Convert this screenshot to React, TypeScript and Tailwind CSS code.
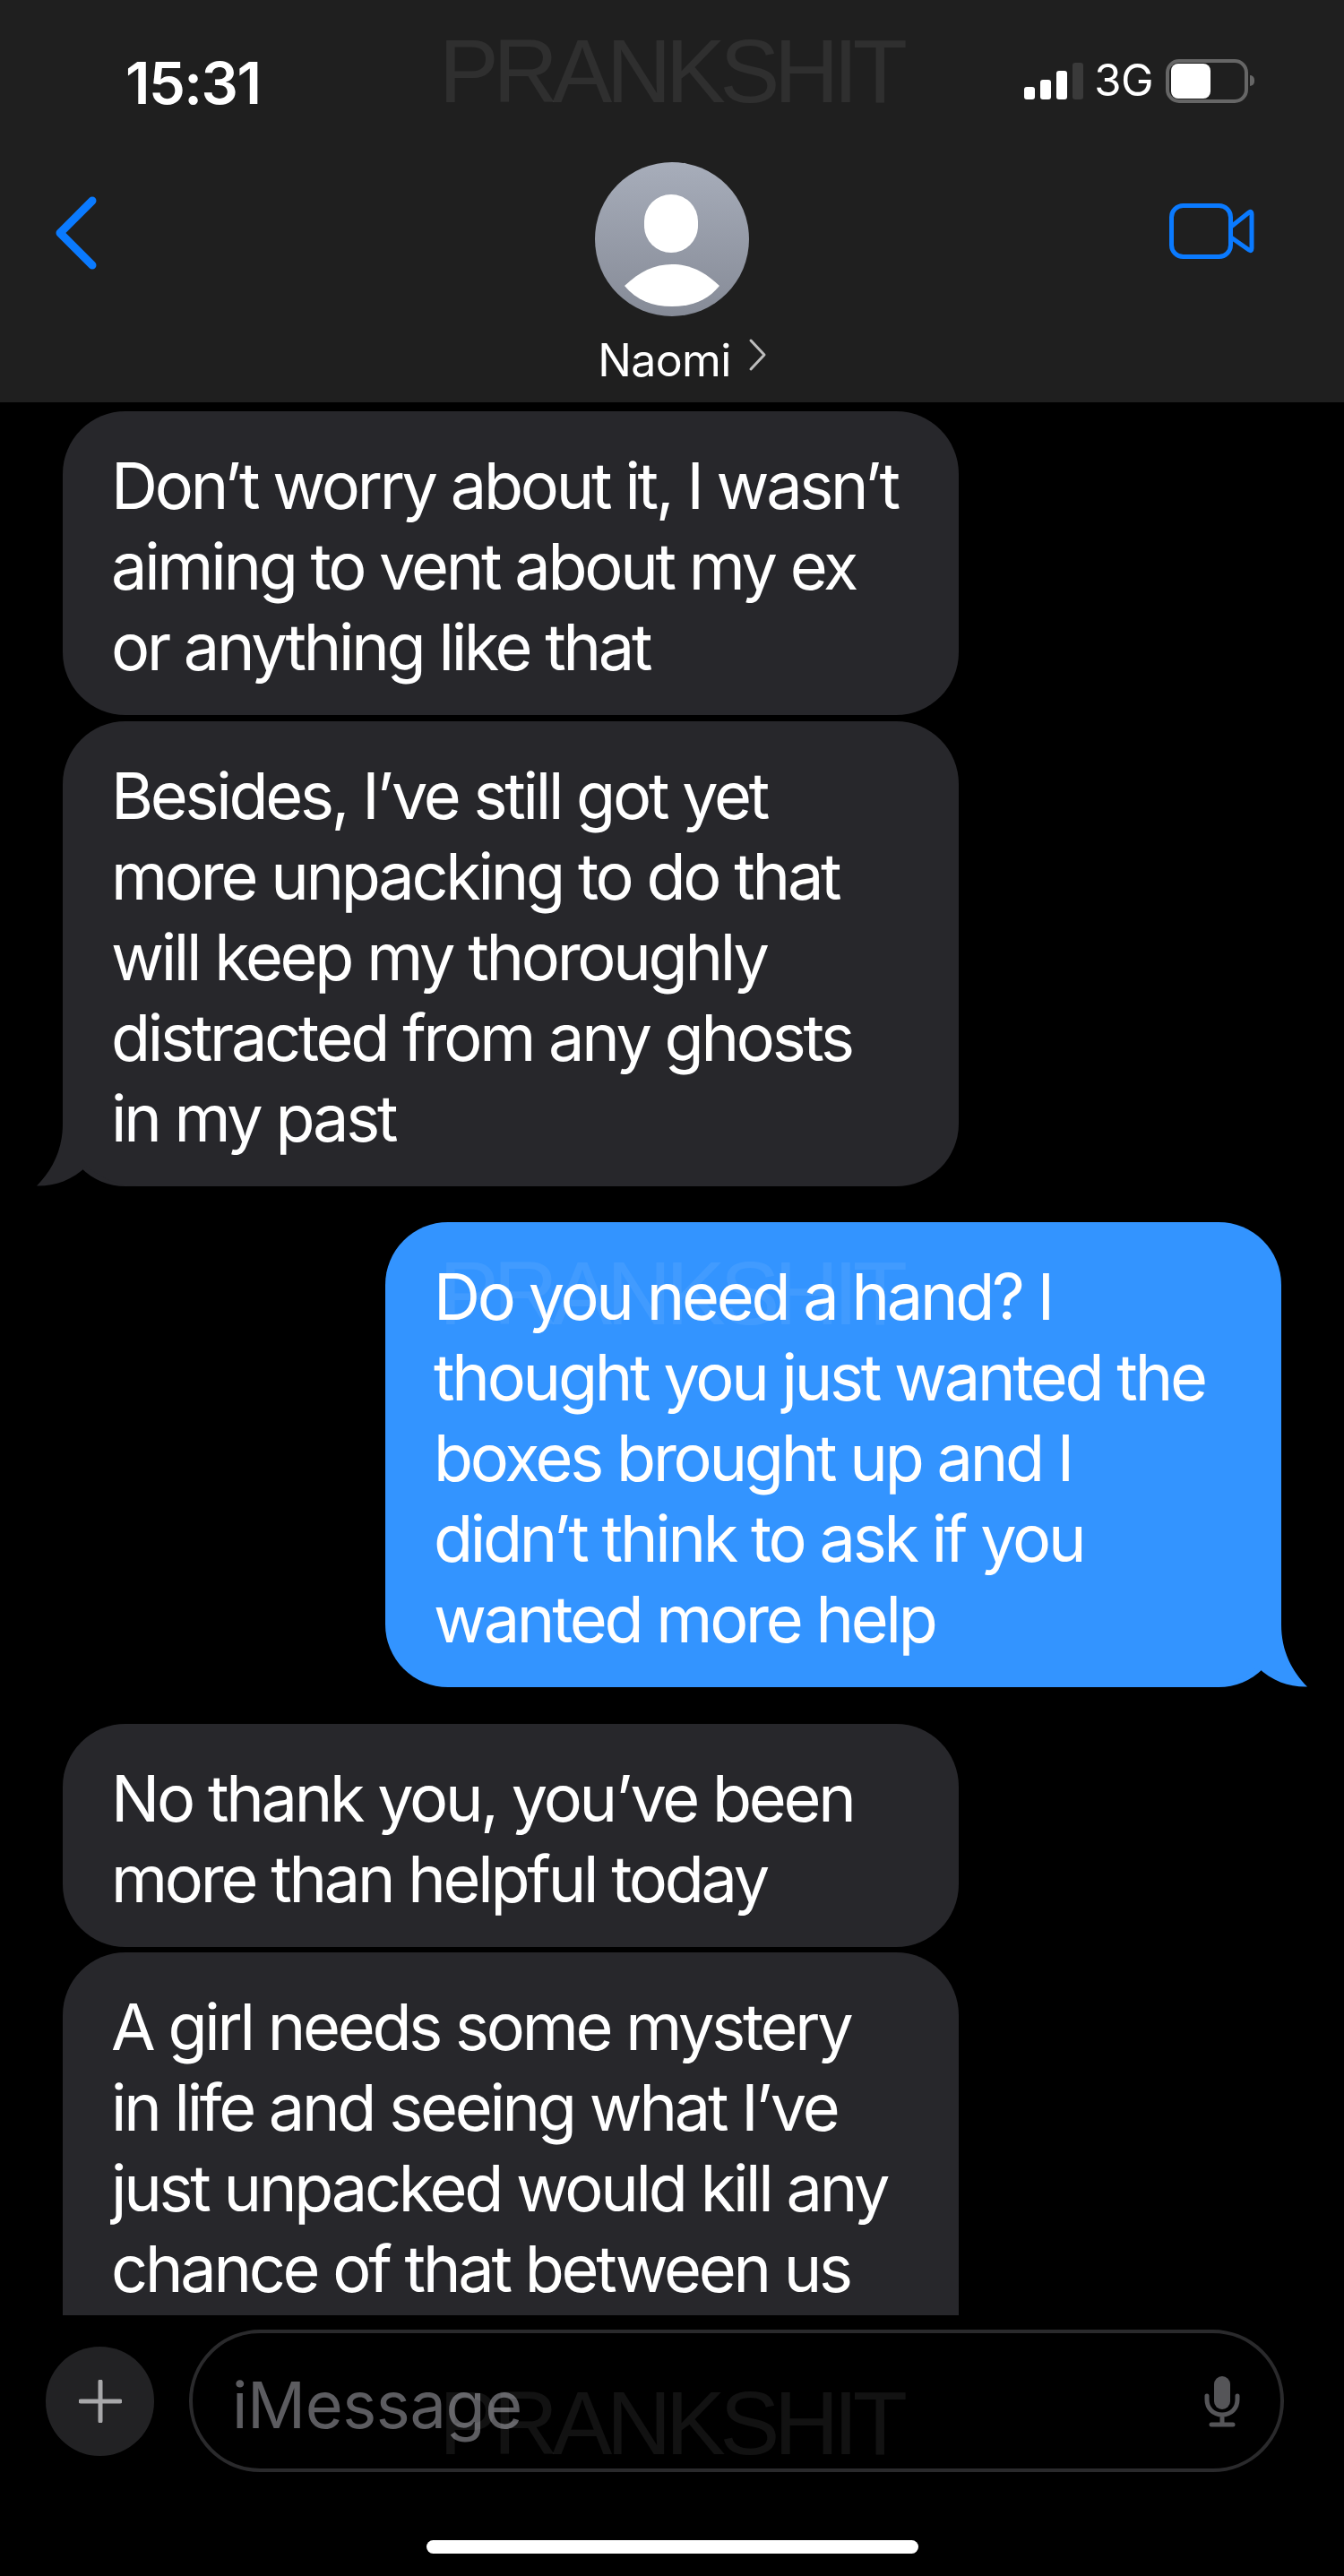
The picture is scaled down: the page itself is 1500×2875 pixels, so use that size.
import React from 'react';

const Tail = ({ fill, flip }: { fill: string; flip?: boolean }) => (
  <svg
    width="115"
    height="90"
    viewBox="0 0 115 90"
    className={flip ? 'absolute -right-[30px] bottom-0 -scale-x-100' : 'absolute -left-[30px] bottom-0'}
  >
    <path d="M30 0 L30 20 C30 50 18 72 1 89.5 C20 90 40 84 57 67 C70 79 90 90 115 90 L115 0 Z" fill={fill} />
  </svg>
);

const Line = ({ text }: { text: string }) => (
  <div className="relative z-10 h-[90px] whitespace-nowrap leading-[90px]">{text}</div>
);

const Bubble = ({ lines, mt, tail }: { lines: string[]; mt: string; tail?: boolean }) => (
  <div className={`relative w-[1000px] ml-[70px] ${mt} rounded-[70px] bg-[#27272b] pl-[54px] pt-[38px] pb-[31px] text-white`}>
    {lines.map((l) => (
      <Line key={l} text={l} />
    ))}
    {tail && <Tail fill="#27272b" />}
  </div>
);

const Watermark = ({ top }: { top: string }) => (
  <div className={`pointer-events-none absolute left-[490px] ${top} whitespace-nowrap text-[100px] leading-[100px] tracking-[-6.2px] text-white/[0.07] font-['Liberation_Sans',sans-serif]`}>
    PRANKSHIT
  </div>
);

export default function App() {
  return (
    <div className="relative flex h-[2875px] w-[1500px] flex-col overflow-hidden bg-black font-['Inter',sans-serif] text-[72px] tracking-[-3.25px]">
      {/* header */}
      <header className="h-[449px] shrink-0 bg-[#1f1f1f] text-white">
        <div className="flex h-[181px] items-start justify-between pl-[140px] pr-[100px] pt-[53px]">
          <span className="text-[65px] leading-[80px] font-semibold tracking-[-1.5px]">15:31</span>
          <div className="flex items-center pt-[12px]">
            <div className="flex h-[41px] items-end gap-[6px]">
              <div className="h-[14px] w-[12px] rounded-[3px] bg-white" />
              <div className="h-[22px] w-[12px] rounded-[3px] bg-white" />
              <div className="h-[32px] w-[12px] rounded-[3px] bg-white" />
              <div className="h-[41px] w-[12px] rounded-[3px] bg-[#3a3a3a]" />
            </div>
            <span className="ml-[12px] text-[49px] leading-[50px] tracking-[-0.5px]">3G</span>
            <div className="ml-[14px] flex h-[49px] w-[92px] items-center rounded-[15px] border-[4px] border-[#666] pl-[2px]">
              <div className="h-[39px] w-[44px] rounded-[8px] bg-white" />
            </div>
            <div className="ml-[2px] h-[12px] w-[5px] rounded-r-full bg-[#666]" />
          </div>
        </div>
        <div className="grid grid-cols-[1fr_auto_1fr]">
          <div className="pl-[60px] pt-[38px]">
            <svg width="50" height="82" viewBox="0 0 50 82" fill="none">
              <path d="M43 5 L7 41 L43 77" stroke="#0a7aff" strokeWidth="9" strokeLinecap="round" strokeLinejoin="round" />
            </svg>
          </div>
          <div className="flex flex-col items-center">
            <div className="relative h-[172px] w-[172px] overflow-hidden rounded-full bg-gradient-to-b from-[#a7adba] to-[#868b97]">
              <div className="absolute left-[55px] top-[36px] h-[65px] w-[60px] rounded-full bg-white" />
              <svg className="absolute left-[30px] top-[112px]" width="112" height="52" viewBox="0 0 112 52">
                <path d="M3 26 C20 10 36 2 56 2 C76 2 92 10 109 26 C96 42 78 49 56 49 C34 49 16 42 3 26 Z" fill="#fff" />
              </svg>
            </div>
            <div className="mt-[24px] flex items-start pl-[24px]">
              <span className="text-[50px] leading-[50px] tracking-[-0.6px]">Naomi</span>
              <svg className="ml-[19px]" width="22" height="38" viewBox="0 0 22 38" fill="none">
                <path d="M3 3 L18 19 L3 35" stroke="#bdbdbd" strokeWidth="3" strokeLinecap="round" strokeLinejoin="round" />
              </svg>
            </div>
          </div>
          <div className="flex justify-end pr-[98px] pt-[46px]">
            <svg width="98" height="66" viewBox="0 0 98 66" fill="none" stroke="#0a7aff" strokeWidth="5" strokeLinejoin="round">
              <rect x="3.5" y="2.5" width="66" height="57" rx="13" />
              <path d="M70 26 L90 10 Q93 8 93 12 V50 Q93 54 90 52 L70 38" />
            </svg>
          </div>
        </div>
      </header>

      {/* messages */}
      <main className="h-[2136px] shrink-0 overflow-hidden">
        <Bubble mt="mt-[10px]" lines={['Don’t worry about it, I wasn’t', 'aiming to vent about my ex', 'or anything like that']} />
        <Bubble mt="mt-[7px]" tail lines={['Besides, I’ve still got yet', 'more unpacking to do that', 'will keep my thoroughly', 'distracted from any ghosts', 'in my past']} />
        <div className="relative ml-[430px] mt-[40px] w-[1000px] rounded-[70px] bg-[#3394ff] pl-[54px] pt-[38px] pb-[31px] text-white">
          {['Do you need a hand? I', 'thought you just wanted the', 'boxes brought up and I', 'didn’t think to ask if you', 'wanted more help'].map((l) => (
            <Line key={l} text={l} />
          ))}
          <Tail fill="#3394ff" flip />
        </div>
        <Bubble mt="mt-[41px]" lines={['No thank you, you’ve been', 'more than helpful today']} />
        <div className="ml-[70px] mt-[6px] h-[405px] w-[1000px] rounded-t-[70px] bg-[#27272b] pl-[54px] pt-[38px] text-white">
          {['A girl needs some mystery', 'in life and seeing what I’ve', 'just unpacked would kill any', 'chance of that between us'].map((l) => (
            <Line key={l} text={l} />
          ))}
        </div>
      </main>

      {/* composer */}
      <footer className="flex flex-1 flex-col">
        <div className="mt-[15px] flex items-center pl-[51px]">
          <div className="flex h-[122px] w-[121px] items-center justify-center rounded-full bg-[#222224]">
            <svg width="48" height="48" viewBox="0 0 48 48" fill="none" stroke="#a8a8aa" strokeWidth="5" strokeLinecap="round">
              <path d="M24 2 V46 M2 24 H46" />
            </svg>
          </div>
          <div className="ml-[39px] flex h-[159px] w-[1222px] items-center justify-between rounded-[80px] border-[4px] border-[#2a2a2c] pl-[44px] pr-[44px]">
            <span className="pt-[8px] tracking-[-0.4px] text-[#5c5c60]">iMessage</span>
            <svg width="42" height="58" viewBox="0 0 42 58" fill="none" stroke="#555558" strokeWidth="5" strokeLinecap="round">
              <rect x="12" y="1" width="18" height="37" rx="9" fill="#555558" stroke="none" />
              <path d="M4 23 V27 C4 37 11 44 21 44 C31 44 38 37 38 27 V23 M21 44 V54 M9 55 H33" />
            </svg>
          </div>
        </div>
        <div className="ml-[476px] mt-[76px] h-[15px] w-[549px] rounded-full bg-white" />
      </footer>

      <Watermark top="top-[29px]" />
      <Watermark top="top-[1393px]" />
      <Watermark top="top-[2654px]" />
    </div>
  );
}
